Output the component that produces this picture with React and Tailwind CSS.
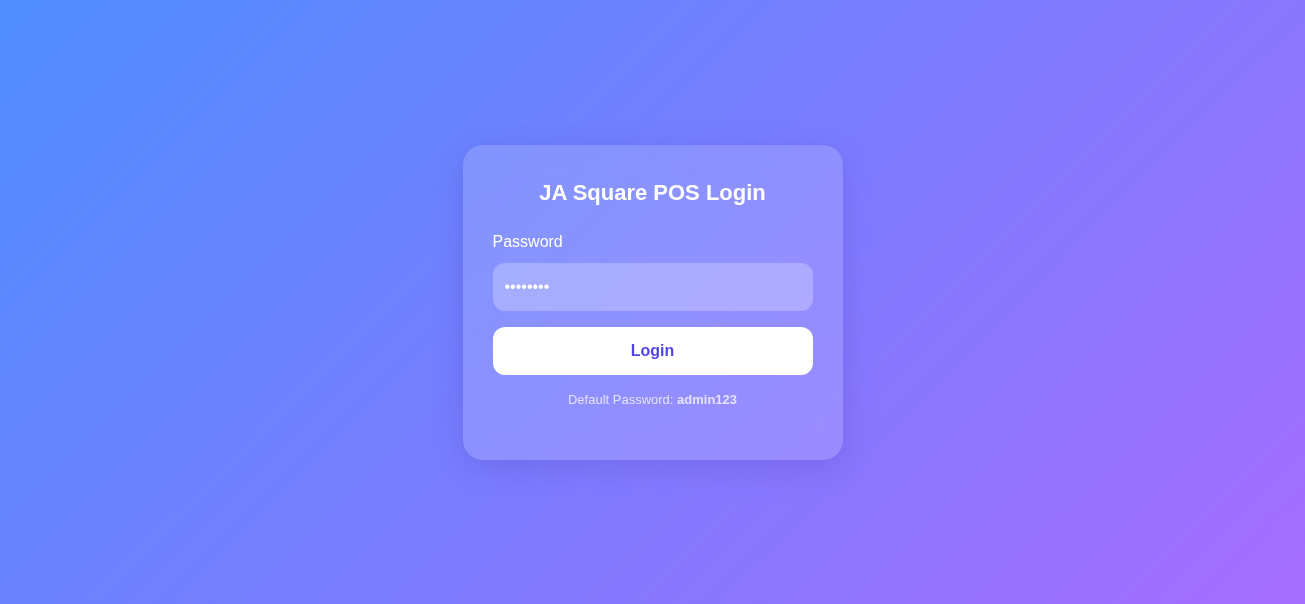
import { useState } from "react";

const App = () => {
  const [password, setPassword] = useState("admin123");

  return (
    <div
      className="flex min-h-screen w-full items-center justify-center bg-[linear-gradient(135deg,#4f8dff,#a66dff)]"
      style={{ fontFamily: '"Liberation Sans", Arial, sans-serif' }}
    >
      {/* Login card */}
      <div className="w-[380px] rounded-[20px] bg-white/15 px-[30px] pt-[35px] pb-[53px] shadow-[0_8px_32px_rgba(60,40,160,0.2)] backdrop-blur-md">
        <h2 className="text-center text-[22px] leading-[26px] font-bold text-white">
          JA Square POS Login
        </h2>

        <label className="mt-[27px] mb-3 block text-base leading-[18px] text-white">
          Password
        </label>
        <input
          type="password"
          value={password}
          onChange={(e) => setPassword(e.target.value)}
          className="block h-12 w-full rounded-xl bg-white/25 px-3 text-base text-white outline-none"
        />

        <button className="mt-4 h-12 w-full rounded-xl bg-white text-base font-bold text-[#4f46e5]">
          Login
        </button>

        <p className="mt-[17px] text-center text-[13px] leading-[15px] text-white/75">
          Default Password: <span className="font-bold">admin123</span>
        </p>
      </div>
    </div>
  );
};

export default App;
